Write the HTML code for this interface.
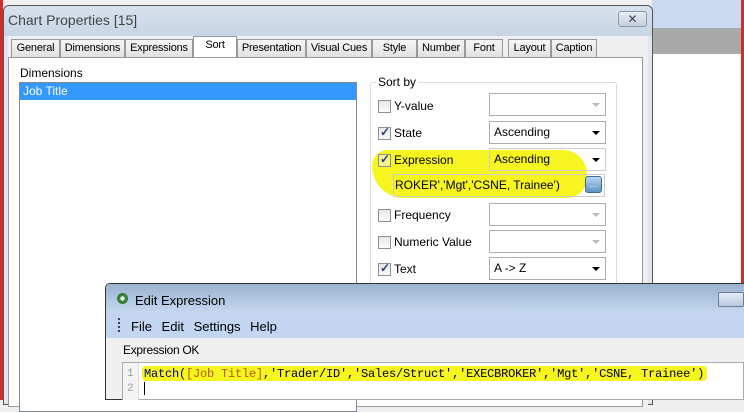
<!DOCTYPE html>
<html><head><meta charset="utf-8"><style>
*{margin:0;padding:0;box-sizing:border-box}
body{width:744px;height:400px;overflow:hidden;position:relative;background:#f0f0f0;font-family:"Liberation Sans",sans-serif;font-size:12px;color:#000}
.a{position:absolute}
.tab{position:absolute;top:39px;height:19px;border:1px solid #999;border-bottom:none;background:linear-gradient(#f6f6f6,#e0e0e0);font-size:11px;line-height:17px;text-align:center;white-space:nowrap;overflow:hidden;letter-spacing:-0.2px}
.cb{position:absolute;width:13px;height:13px;border:1px solid #8e8f8f;background:linear-gradient(#e8e8e8,#fafafa)}
.cb.on::after{content:"✓";position:absolute;left:1px;top:-3px;font-size:12px;color:#2a3d7a;font-weight:bold}
.cmb{position:absolute;left:489px;width:117px;height:23px;border:1px solid #adadad;background:#fff;font-size:12px;line-height:20px;padding-left:4px}
.cmb .ar{position:absolute;right:5px;top:9px;width:0;height:0;border-left:4px solid transparent;border-right:4px solid transparent;border-top:4px solid #000}
.cmb.dis .ar{border-top-color:#bbb}
.lb{position:absolute;left:394px;font-size:12px}
</style></head><body>
<div class="a" style="left:652px;top:0;width:92px;height:28px;background:#c9daf0"></div>
<div class="a" style="left:652px;top:28px;width:92px;height:26px;background:#a9a9a9"></div>
<div class="a" style="left:652px;top:54px;width:92px;height:230px;background:#fff"></div>
<div class="a" style="left:0;top:0;width:3px;height:400px;background:#d42b2b"></div>
<div class="a" style="left:741px;top:0;width:3px;height:400px;background:#d42b2b"></div>
<div class="a" style="left:3px;top:5px;width:650px;height:400px;background:#dfe8f2;border:1px solid #555;border-radius:6px 6px 0 0"></div>
<div class="a" style="left:4px;top:6px;width:648px;height:30px;background:linear-gradient(#d8e2ee,#c7d5e4);border-radius:6px 6px 0 0"></div>
<div class="a" style="left:8px;top:12px;font-size:14px;color:#444">Chart Properties [15]</div>
<div class="a" style="left:618px;top:11px;width:29px;height:16px;border:1px solid #8b98a8;border-radius:3px;background:linear-gradient(#e6ecf3,#c4cfdc);text-align:center;font-size:12px;line-height:14px;color:#445">✕</div>
<div class="a" style="left:8px;top:36px;width:640px;height:370px;background:#f0f0f0"></div>
<div class="tab" style="left:11px;width:49px">General</div>
<div class="tab" style="left:60px;width:65px">Dimensions</div>
<div class="tab" style="left:125px;width:68px">Expressions</div>
<div class="tab" style="left:193px;top:36px;height:22px;width:44px;background:#fff">Sort</div>
<div class="tab" style="left:237px;width:69px">Presentation</div>
<div class="tab" style="left:306px;width:66px">Visual Cues</div>
<div class="tab" style="left:372px;width:45px">Style</div>
<div class="tab" style="left:417px;width:48px">Number</div>
<div class="tab" style="left:465px;width:38px">Font</div>
<div class="tab" style="left:508px;width:43px">Layout</div>
<div class="tab" style="left:551px;width:46px">Caption</div>
<div class="a" style="left:8px;top:57px;width:635px;height:350px;background:#fff;border:1px solid #999"></div>
<div class="a" style="left:20px;top:66px">Dimensions</div>
<div class="a" style="left:19px;top:82px;width:338px;height:330px;border:1px solid #828790;background:#fff"></div>
<div class="a" style="left:20px;top:83px;width:336px;height:17px;background:#3399ff;color:#fff;padding-left:3px;line-height:17px">Job Title</div>
<div class="a" style="left:370px;top:82px;width:247px;height:210px;border:1px solid #d5dfe5;border-radius:3px"></div>
<div class="a" style="left:376px;top:75px;background:#fff;padding:0 2px">Sort by</div>
<div class="cb" style="left:378px;top:100px"></div><div class="lb" style="top:99px">Y-value</div>
<div class="cmb dis" style="top:93px"><div class="ar"></div></div>
<div class="cb on" style="left:378px;top:127px"></div><div class="lb" style="top:126px">State</div>
<div class="cmb" style="top:121px">Ascending<div class="ar"></div></div>
<div class="a" style="left:372px;top:150px;width:215px;height:48px;background:#f7f520;border-radius:20px 30px 25px 40px"></div>
<div class="cb on" style="left:378px;top:154px;background:#f5f390"></div><div class="lb" style="top:153px">Expression</div>
<div class="cmb" style="top:148px;background:transparent;border-color:#ccc">Ascending<div class="ar"></div></div>
<div class="a" style="left:393px;top:174px;width:212px;height:23px;border:1px solid #ccc;font-size:12px;line-height:21px;padding-left:1px;overflow:hidden;white-space:nowrap">ROKER','Mgt','CSNE, Trainee')</div>
<div class="a" style="left:585px;top:176px;width:17px;height:17px;border:1px solid #3d6a9a;border-radius:3px;background:linear-gradient(#b9d6f2,#5f92c7);font-size:9px;text-align:center;line-height:14px;color:#fff">...</div>
<div class="cb" style="left:378px;top:209px"></div><div class="lb" style="top:208px">Frequency</div>
<div class="cmb dis" style="top:203px"><div class="ar"></div></div>
<div class="cb" style="left:378px;top:236px"></div><div class="lb" style="top:235px">Numeric Value</div>
<div class="cmb dis" style="top:230px"><div class="ar"></div></div>
<div class="cb on" style="left:378px;top:263px"></div><div class="lb" style="top:262px">Text</div>
<div class="cmb" style="top:257px">A -&gt; Z<div class="ar"></div></div>
<div class="a" style="left:105px;top:283px;width:640px;height:117px;border:1px solid #333;border-radius:5px 0 0 0;background:#f0f0f0"></div>
<div class="a" style="left:106px;top:284px;width:638px;height:30px;background:linear-gradient(#9bb3d0,#c6d9f1);border-radius:5px 0 0 0"></div>
<div class="a" style="left:117px;top:293px;width:11px;height:11px;border-radius:50%;background:radial-gradient(#fff 25%,#3a8a3a 30%,#2a6a2a)"></div>
<div class="a" style="left:135px;top:293px;font-size:13px">Edit Expression</div>
<div class="a" style="left:718px;top:292px;width:26px;height:15px;border:1px solid #6d7f97;border-radius:2px;background:linear-gradient(#e5ecf5,#b8c8dc)"></div>
<div class="a" style="left:106px;top:314px;width:638px;height:24px;background:#c3d6f1"></div>
<div class="a" style="left:118px;top:318px;width:2px;height:14px;border-left:2px dotted #345"></div>
<div class="a" style="left:131px;top:319px;font-size:13px;word-spacing:6px">File Edit Settings Help</div>
<div class="a" style="left:123px;top:343px;font-size:12px;letter-spacing:-0.3px">Expression OK</div>
<div class="a" style="left:122px;top:362px;width:622px;height:38px;background:#fff;border:1px solid #aaa"></div>
<div class="a" style="left:123px;top:363px;width:16px;height:37px;background:#f4f4f4;border-right:1px solid #ddd"></div>
<div class="a" style="left:127px;top:367px;font-family:'Liberation Mono',monospace;font-size:11px;color:#999;line-height:15px">1<br>2</div>
<div class="a" style="left:142px;top:366px;width:565px;height:15px;background:#f7f520;border-radius:4px"></div>
<div class="a" style="left:144px;top:367px;font-family:'Liberation Mono',monospace;font-size:12px;line-height:15px;letter-spacing:-0.2px;white-space:pre"><span style="color:#00007f">Match(</span><span style="color:#b06000">[Job Title]</span>,'Trader/ID','Sales/Struct','EXECBROKER','Mgt','CSNE, Trainee')</div>
<div class="a" style="left:144px;top:382px;width:1px;height:13px;background:#000"></div>
</body></html>
